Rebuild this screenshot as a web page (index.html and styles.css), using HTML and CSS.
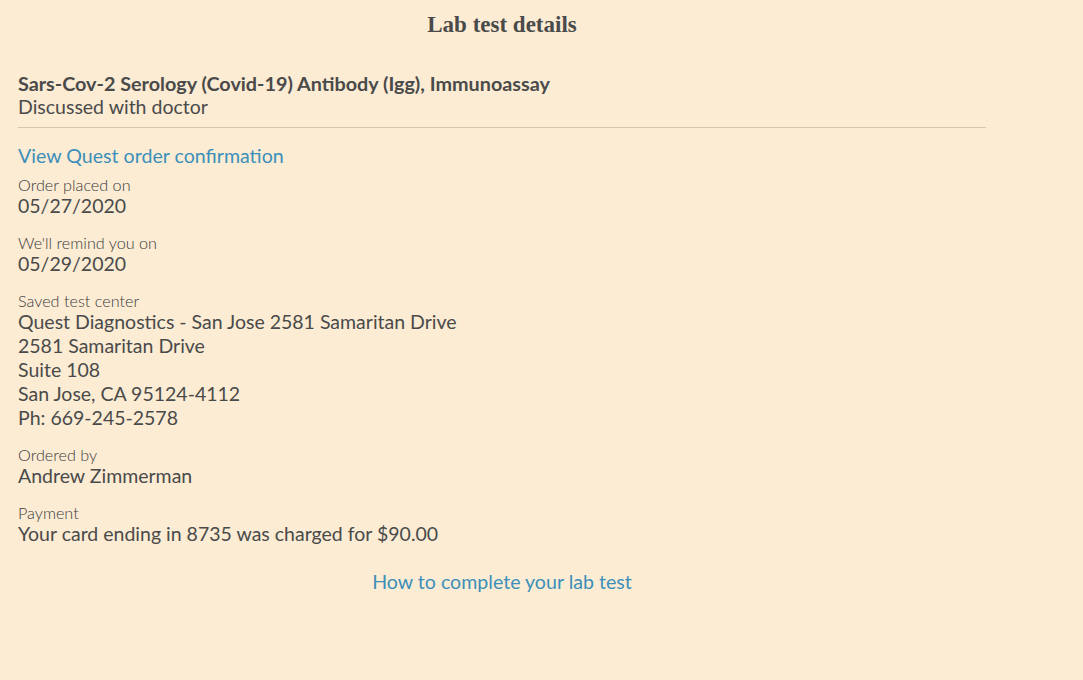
FILE: index.html
```html
<!DOCTYPE html>
<html lang="en">
<head>
<meta charset="utf-8">
<title>Lab test details</title>
<link rel="stylesheet" href="styles.css">
</head>
<body>
<main class="page">
  <h1 class="title">Lab test details</h1>
  <section class="summary">
    <div class="test-name">Sars-Cov-2 Serology (Covid-19) Antibody (Igg), Immunoassay</div>
    <div class="test-status">Discussed with doctor</div>
  </section>
  <a class="link confirm-link" href="#">View Quest order confirmation</a>
  <div class="fields">
    <div class="field">
      <div class="label">Order placed on</div>
      <div class="value">05/27/2020</div>
    </div>
    <div class="field">
      <div class="label">We'll remind you on</div>
      <div class="value">05/29/2020</div>
    </div>
    <div class="field">
      <div class="label">Saved test center</div>
      <div class="value">Quest Diagnostics - San Jose 2581 Samaritan Drive</div>
      <div class="value">2581 Samaritan Drive</div>
      <div class="value">Suite 108</div>
      <div class="value">San Jose, CA 95124-4112</div>
      <div class="value">Ph: 669-245-2578</div>
    </div>
    <div class="field">
      <div class="label">Ordered by</div>
      <div class="value">Andrew Zimmerman</div>
    </div>
    <div class="field">
      <div class="label">Payment</div>
      <div class="value">Your card ending in 8735 was charged for $90.00</div>
    </div>
  </div>
  <div class="footer">
    <a class="link" href="#">How to complete your lab test</a>
  </div>
</main>
</body>
</html>
```

FILE: styles.css
```css
html, body {
  margin: 0;
  padding: 0;
  background: #fcecd4;
}
body {
  font-family: Lato, "Open Sans", sans-serif;
  color: #4a4a4a;
  min-height: 680px;
}
.page {
  width: 968px;
  padding: 0 18px;
  display: flex;
  flex-direction: column;
  align-items: stretch;
}
.title {
  margin: 10px 0 0;
  font-family: "Liberation Serif", "Times New Roman", serif;
  font-weight: bold;
  font-size: 23px;
  line-height: 30px;
  text-align: center;
  color: #4a4a4a;
}
.summary {
  margin-top: 31px;
  padding-bottom: 8px;
  border-bottom: 1px solid #d7c6ad;
}
.test-name {
  font-weight: bold;
  font-size: 19.8px;
  line-height: 24px;
}
.test-status {
  font-size: 19.5px;
  line-height: 24px;
}
.link {
  color: #3d8fb9;
  text-decoration: none;
  font-size: 19.6px;
  line-height: 24px;
}
.confirm-link {
  margin-top: 16px;
  align-self: flex-start;
}
.fields {
  margin-top: 8px;
  display: flex;
  flex-direction: column;
  gap: 16px;
}
.label {
  font-weight: 300;
  font-size: 16.2px;
  line-height: 18px;
  color: #3a3a3a;
}
.value {
  font-size: 19.5px;
  line-height: 24px;
}
.footer {
  margin-top: 24px;
  text-align: center;
}
```
